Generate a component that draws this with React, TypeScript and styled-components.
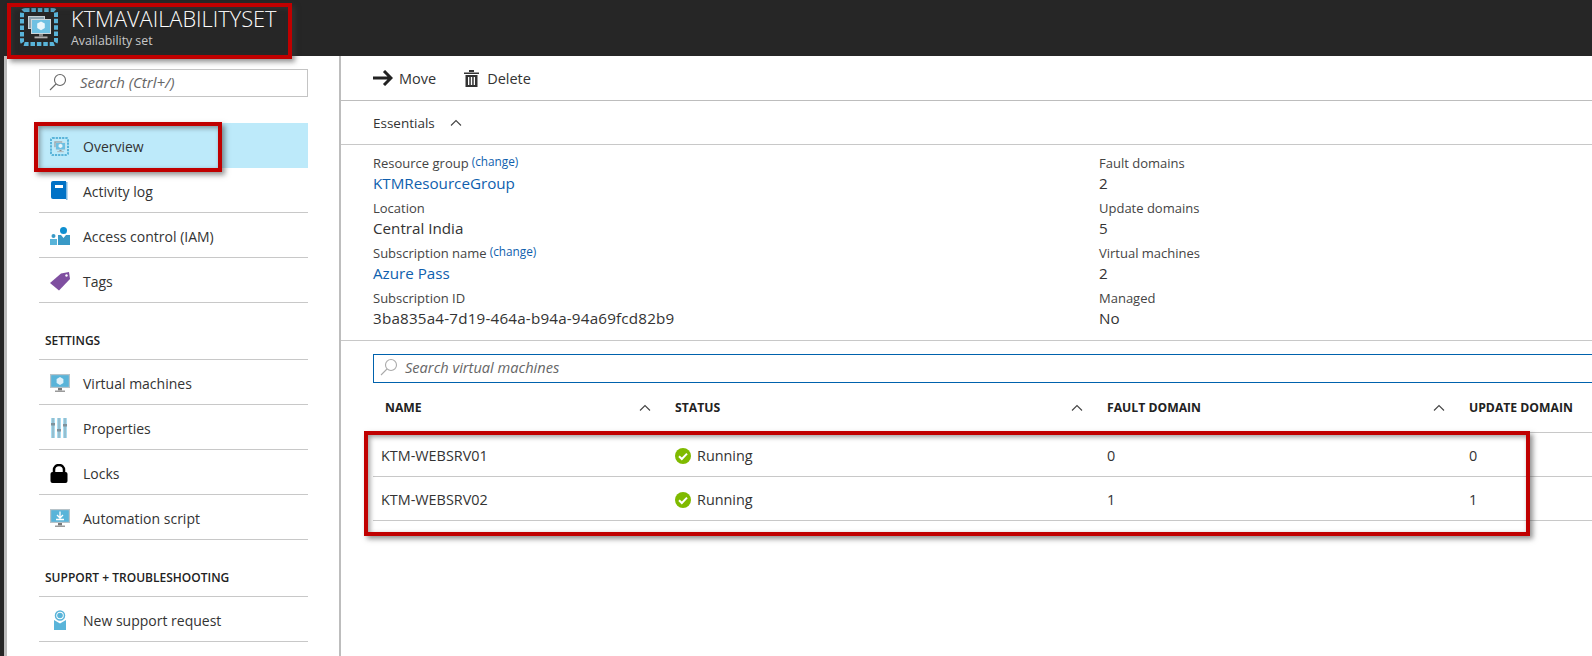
import React from 'react'
import styled, { createGlobalStyle } from 'styled-components'

const Global = createGlobalStyle`
  html, body { margin: 0; padding: 0; background: #fff; }
  body { font-family: "Open Sans", "Noto Sans", sans-serif; color: #333; overflow: hidden; }
`

const Page = styled.div`
  position: relative;
  width: 1592px;
  height: 656px;
  overflow: hidden;
`

const TopBar = styled.header`
  height: 56px;
  background: #262626;
  display: flex;
  align-items: center;
  padding: 0 0 2px 20px;
  box-sizing: border-box;
  gap: 13px;
`

const Titles = styled.div`
  display: flex;
  flex-direction: column;
`

const Title = styled.div`
  color: #fff;
  font-size: 21.8px;
  font-weight: 300;
  line-height: 28px;
`

const Subtitle = styled.div`
  color: #c8c8c8;
  font-size: 12.3px;
  line-height: 16px;
`

const Body = styled.div`
  display: flex;
  height: 600px;
`

const Edge = styled.div`
  width: 7px;
  flex: none;
  background: #bcbcbc;
  border-left: 4px solid #262626;
  box-sizing: border-box;
`

const Side = styled.aside`
  width: 334px;
  flex: none;
  box-sizing: border-box;
  padding: 13px 31px 0 32px;
  border-right: 2px solid #bdbdbd;
`

const SideSearch = styled.div`
  height: 28px;
  box-sizing: border-box;
  border: 1px solid #c4c4c4;
  display: flex;
  align-items: center;
  padding: 0 0 2px 9px;
  gap: 13px;
  color: #666;
  font-size: 15px;
  font-style: italic;
  margin-bottom: 26px;
`

const NavRow = styled.div<{ $active?: boolean }>`
  height: 45px;
  box-sizing: border-box;
  display: flex;
  align-items: center;
  padding-top: 2px;
  font-size: 14px;
  color: #333;
  border-bottom: 1px solid ${({ $active }) => ($active ? '#bdeafa' : '#c8c8c8')};
  background: ${({ $active }) => ($active ? '#bdeafa' : 'transparent')};
`

const NavIcon = styled.span`
  width: 44px;
  flex: none;
  display: flex;
  padding-left: 11px;
  box-sizing: border-box;
`

const NavHeading = styled.div`
  height: 57px;
  box-sizing: border-box;
  padding: 30px 0 0 6px;
  border-bottom: 1px solid #c8c8c8;
  font-size: 12px;
  font-weight: 600;
  line-height: 16px;
  color: #222;
`

const Main = styled.main`
  flex: 1;
  min-width: 0;
`

const Toolbar = styled.div`
  height: 45px;
  box-sizing: border-box;
  display: flex;
  align-items: center;
  padding-left: 32px;
  border-bottom: 1px solid #bdbdbd;
  font-size: 14.5px;
`

const ToolButton = styled.div<{ $gap: number }>`
  display: flex;
  align-items: center;
  gap: ${({ $gap }) => $gap}px;
  margin-right: 28px;
`

const EssentialsBar = styled.div`
  height: 44px;
  box-sizing: border-box;
  display: flex;
  align-items: center;
  gap: 15px;
  padding-left: 32px;
  border-bottom: 1px solid #c8c8c8;
  font-size: 13.5px;
`

const Facts = styled.div`
  height: 196px;
  box-sizing: border-box;
  padding: 8px 0 0 32px;
  display: grid;
  grid-template-columns: 726px 1fr;
  grid-auto-rows: 45px;
  border-bottom: 1px solid #c8c8c8;
`

const Fact = styled.div`
  height: 45px;
`

const FactLabel = styled.div`
  font-size: 13px;
  line-height: 20px;
  color: #444;
`

const Change = styled.a`
  font-size: 11.8px;
  color: #0f5fae;
  margin-left: 3px;
  position: relative;
  top: -2px;
`

const FactValue = styled.div<{ $link?: boolean; $tracking?: number }>`
  font-size: 15.2px;
  line-height: 21px;
  letter-spacing: ${({ $tracking }) => $tracking ?? 0}px;
  color: ${({ $link }) => ($link ? '#0f5fae' : '#333')};
`

const VmSearch = styled.div`
  margin: 13px 0 0 32px;
  height: 29px;
  box-sizing: border-box;
  border: 1px solid #0062ad;
  border-right: none;
  display: flex;
  align-items: center;
  padding: 0 0 4px 6px;
  gap: 7px;
  font-size: 14.6px;
  font-style: italic;
  color: #666;
`

const Grid = styled.div`
  margin-left: 32px;
  display: grid;
  grid-template-columns: 302px 432px 362px 1fr;
`

const HeadCell = styled.div`
  height: 50px;
  box-sizing: border-box;
  display: flex;
  align-items: center;
  justify-content: space-between;
  padding-right: 24px;
  font-size: 12.2px;
  font-weight: 700;
  white-space: nowrap;
  color: #222;
  border-bottom: 1px solid #c8c8c8;
  &:first-child { padding-left: 12px; }
`

const Cell = styled.div`
  height: 44px;
  box-sizing: border-box;
  display: flex;
  align-items: center;
  gap: 6px;
  padding-top: 2px;
  font-size: 14.4px;
  color: #333;
  border-bottom: 1px solid #c8c8c8;
  &:nth-child(4n + 1) { padding-left: 8px; }
`

const Mark = styled.div`
  position: absolute;
  box-sizing: border-box;
  border: 4px solid #c00000;
  pointer-events: none;
  box-shadow: 3px 3px 5px rgba(60, 60, 60, 0.55), inset 2px 2px 5px rgba(60, 60, 60, 0.5);
`

const TitleMark = styled(Mark)`
  left: 7px;
  top: 3px;
  width: 285px;
  height: 56px;
`

const OverviewMark = styled(Mark)`
  left: 34px;
  top: 122px;
  width: 188px;
  height: 50px;
`

const RowsMark = styled(Mark)`
  left: 364px;
  top: 431px;
  width: 1166px;
  height: 105px;
`

const SetIcon = ({ size }: { size: number }) => (
  <svg width={size} height={size} viewBox="0 0 38 38">
    <rect x="2" y="2" width="34" height="34" rx="3" fill="none" stroke="#59b4d9" strokeWidth="4" strokeDasharray="4.5 1.9" />
    <rect x="8" y="8" width="17" height="13" fill="#c5d0d5" />
    <rect x="9" y="9" width="15" height="11" fill="#8ba1ac" />
    <rect x="11" y="11" width="20" height="15" fill="#ced7db" />
    <rect x="12" y="12" width="18" height="13" fill="#6ec0e2" />
    <path d="M21 13.500l3.800 2.100v4.400L21 22.200 17.200 20v-4.400z" fill="#eaf6fb" />
    <rect x="19" y="26" width="4" height="2.500" fill="#8a8a8a" />
    <rect x="14.500" y="28.500" width="13" height="1.800" fill="#b0b0b0" />
  </svg>
)

const VmIcon = ({ arrow }: { arrow?: boolean }) => (
  <svg width="20" height="18" viewBox="0 0 20 18">
    <rect x="0" y="0" width="20" height="14" fill="#b7c3c9" />
    <rect x="1.200" y="1.200" width="17.600" height="11.600" fill="#59b4d9" />
    <rect x="8" y="14" width="4" height="2.500" fill="#7a7a7a" />
    <rect x="5" y="16.500" width="10" height="1.500" fill="#9a9a9a" />
    {arrow ? (
      <path d="M10 2.500v6M7 6l3 3 3-3M6 10.500h8" stroke="#fff" strokeWidth="1.300" fill="none" />
    ) : (
      <path d="M10 3l3.400 2v4L10 11 6.600 9V5z" fill="#dff1f9" />
    )}
  </svg>
)

const LogIcon = () => (
  <svg width="18" height="20" viewBox="0 0 18 20">
    <path d="M1 2a2 2 0 0 1 2-2h13v18H3a2 2 0 0 1-2-2z" fill="#0072c6" />
    <rect x="16" y="1" width="1.500" height="18" fill="#7fb8e2" />
    <rect x="5" y="4" width="8" height="3" fill="#fff" />
  </svg>
)

const AccessIcon = () => (
  <svg width="20" height="18" viewBox="0 0 20 18">
    <circle cx="13.500" cy="3.500" r="3.500" fill="#0f8fd0" />
    <path d="M8 8h3l2.500 3L16 8h4v10H8z" fill="#3999c6" />
    <circle cx="3.500" cy="9" r="2" fill="#3999c6" />
    <path d="M0 12h7v6H0z" fill="#59b4d9" />
  </svg>
)

const TagIcon = () => (
  <svg width="20" height="19" viewBox="0 0 20 19">
    <path d="M0 11L11 1.500 19 0l1 7-11 11.500z" fill="#7f4fa0" />
    <circle cx="16.500" cy="3.500" r="1.200" fill="#fff" />
  </svg>
)

const PropsIcon = () => (
  <svg width="18" height="20" viewBox="0 0 18 20">
    {[1, 7, 13].map((x, i) => (
      <g key={x}>
        <rect x={x} y="0" width="4" height="20" fill="#a9dcf0" />
        <rect x={x + 1.300} y="0" width="1.400" height="20" fill="#8fb3c2" />
        <rect x={x} y={[5, 11, 6][i]} width="4" height="2.500" fill="#7f929c" />
      </g>
    ))}
  </svg>
)

const LockIcon = () => (
  <svg width="18" height="19" viewBox="0 0 18 19">
    <path d="M4 9V6a5 5 0 0 1 10 0v3" fill="none" stroke="#000" strokeWidth="2.500" />
    <rect x="0.500" y="8" width="17" height="11" rx="2" fill="#000" />
  </svg>
)

const SupportIcon = () => (
  <svg width="20" height="20" viewBox="0 0 20 20">
    <circle cx="10" cy="5.500" r="4.500" fill="none" stroke="#59b4d9" strokeWidth="1.500" />
    <circle cx="10" cy="5.500" r="2.800" fill="#59b4d9" />
    <path d="M4 10l6 3.500L16 10v10H4z" fill="#59b4d9" />
  </svg>
)

const SearchIcon = ({ color = '#666' }: { color?: string }) => (
  <svg width="18" height="18" viewBox="0 0 18 18" fill="none" stroke={color} strokeWidth="1.100">
    <circle cx="11" cy="7" r="5.500" />
    <path d="M7 11l-6 6" />
  </svg>
)

const Caret = () => (
  <svg width="12" height="7" viewBox="0 0 12 7" fill="none" stroke="#444" strokeWidth="1.100">
    <path d="M1 6.500l5-5 5 5" />
  </svg>
)

const ArrowIcon = () => (
  <svg width="20" height="16" viewBox="0 0 20 16" fill="none" stroke="#222" strokeWidth="3">
    <path d="M0 8h18M11 1l7 7-7 7" />
  </svg>
)

const TrashIcon = () => (
  <svg width="15" height="17" viewBox="0 0 15 17" fill="#333">
    <path d="M0 2.500h15V4H0zM5 0h5v2H5z" />
    <path d="M1.500 5h12v12h-12zM4 7v8h1.300V7zm2.800 0v8h1.400V7zm2.900 0v8H11V7z" fillRule="evenodd" />
  </svg>
)

const CheckIcon = () => (
  <svg width="16" height="16" viewBox="0 0 16 16">
    <circle cx="8" cy="8" r="8" fill="#7fba00" />
    <path d="M4 8.200l2.800 2.800L12 5.600" fill="none" stroke="#fff" strokeWidth="2" />
  </svg>
)

const navTop = [
  { label: 'Activity log', icon: <LogIcon /> },
  { label: 'Access control (IAM)', icon: <AccessIcon /> },
  { label: 'Tags', icon: <TagIcon /> },
]

const navSettings = [
  { label: 'Virtual machines', icon: <VmIcon /> },
  { label: 'Properties', icon: <PropsIcon /> },
  { label: 'Locks', icon: <LockIcon /> },
  { label: 'Automation script', icon: <VmIcon arrow /> },
]

const vms = [
  { name: 'KTM-WEBSRV01', fault: '0', update: '0' },
  { name: 'KTM-WEBSRV02', fault: '1', update: '1' },
]

const App: React.FC = () => (
  <Page>
    <Global />
    <TopBar>
      <SetIcon size={38} />
      <Titles>
        <Title>KTMAVAILABILITYSET</Title>
        <Subtitle>Availability set</Subtitle>
      </Titles>
    </TopBar>
    <Body>
      <Edge />
      <Side>
        <SideSearch>
          <SearchIcon />
          Search (Ctrl+/)
        </SideSearch>
        <NavRow $active>
          <NavIcon><SetIcon size={19} /></NavIcon>
          Overview
        </NavRow>
        {navTop.map((n) => (
          <NavRow key={n.label}><NavIcon>{n.icon}</NavIcon>{n.label}</NavRow>
        ))}
        <NavHeading>SETTINGS</NavHeading>
        {navSettings.map((n) => (
          <NavRow key={n.label}><NavIcon>{n.icon}</NavIcon>{n.label}</NavRow>
        ))}
        <NavHeading>SUPPORT + TROUBLESHOOTING</NavHeading>
        <NavRow><NavIcon><SupportIcon /></NavIcon>New support request</NavRow>
      </Side>
      <Main>
        <Toolbar>
          <ToolButton $gap={6}><ArrowIcon />Move</ToolButton>
          <ToolButton $gap={8}><TrashIcon />Delete</ToolButton>
        </Toolbar>
        <EssentialsBar>Essentials <Caret /></EssentialsBar>
        <Facts>
          <Fact>
            <FactLabel>Resource group<Change>(change)</Change></FactLabel>
            <FactValue $link>KTMResourceGroup</FactValue>
          </Fact>
          <Fact>
            <FactLabel>Fault domains</FactLabel>
            <FactValue>2</FactValue>
          </Fact>
          <Fact>
            <FactLabel>Location</FactLabel>
            <FactValue>Central India</FactValue>
          </Fact>
          <Fact>
            <FactLabel>Update domains</FactLabel>
            <FactValue>5</FactValue>
          </Fact>
          <Fact>
            <FactLabel>Subscription name<Change>(change)</Change></FactLabel>
            <FactValue $link>Azure Pass</FactValue>
          </Fact>
          <Fact>
            <FactLabel>Virtual machines</FactLabel>
            <FactValue>2</FactValue>
          </Fact>
          <Fact>
            <FactLabel>Subscription ID</FactLabel>
            <FactValue $tracking={0.2}>3ba835a4-7d19-464a-b94a-94a69fcd82b9</FactValue>
          </Fact>
          <Fact>
            <FactLabel>Managed</FactLabel>
            <FactValue>No</FactValue>
          </Fact>
        </Facts>
        <VmSearch>
          <SearchIcon color="#aaa" />
          Search virtual machines
        </VmSearch>
        <Grid>
          <HeadCell>NAME <Caret /></HeadCell>
          <HeadCell>STATUS <Caret /></HeadCell>
          <HeadCell>FAULT DOMAIN <Caret /></HeadCell>
          <HeadCell>UPDATE DOMAIN</HeadCell>
          {vms.map((vm) => (
            <React.Fragment key={vm.name}>
              <Cell>{vm.name}</Cell>
              <Cell><CheckIcon />Running</Cell>
              <Cell>{vm.fault}</Cell>
              <Cell>{vm.update}</Cell>
            </React.Fragment>
          ))}
        </Grid>
      </Main>
    </Body>
    <TitleMark />
    <OverviewMark />
    <RowsMark />
  </Page>
)

export default App
